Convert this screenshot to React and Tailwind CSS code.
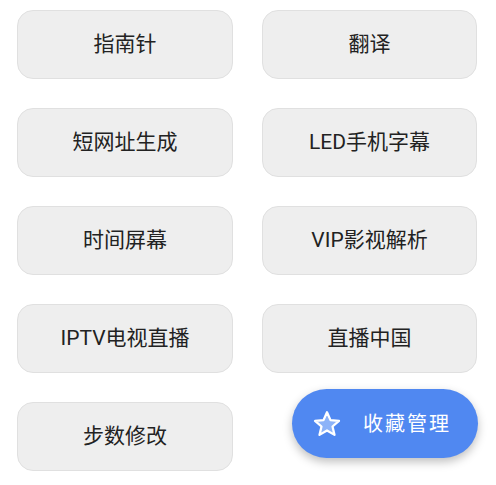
import React from "react";

const tools = [
  "指南针",
  "翻译",
  "短网址生成",
  "LED手机字幕",
  "时间屏幕",
  "VIP影视解析",
  "IPTV电视直播",
  "直播中国",
  "步数修改",
];

function StarIcon() {
  return (
    <svg width="30" height="30" viewBox="0 0 24 24" aria-hidden="true">
      <polygon
        points="12,2.6 14.8,8.9 21.6,9.5 16.4,14 18,20.7 12,17.2 6,20.7 7.6,14 2.4,9.5 9.2,8.9"
        fill="#8db3f8"
        stroke="#ffffff"
        strokeWidth="1.8"
        strokeLinejoin="round"
      />
    </svg>
  );
}

export default function App() {
  return (
    <div
      className="relative h-[485px] w-[496px] overflow-hidden bg-white"
      style={{ fontFamily: 'Roboto, "Noto Sans CJK SC", sans-serif' }}
    >
      {/* grille des outils */}
      <div className="grid grid-cols-[216px_215px] gap-x-[29px] gap-y-[29px] pl-[17px] pt-[10px]">
        {tools.map((t) => (
          <button
            key={t}
            className="flex h-[69px] items-center justify-center rounded-[16px] border border-[#e0e0e0] bg-[#eeeeee] pt-[1px] text-[21px] text-[#222222]"
          >
            {t}
          </button>
        ))}
      </div>

      {/* bouton flottant */}
      <button className="absolute left-[292px] top-[389px] flex h-[69px] w-[186px] items-center rounded-full bg-[#5088f1] pl-[20px] shadow-[0_4px_10px_rgba(0,0,0,0.25)]">
        <StarIcon />
        <span className="ml-[21px] text-[20px] tracking-[2px] text-white">收藏管理</span>
      </button>
    </div>
  );
}
